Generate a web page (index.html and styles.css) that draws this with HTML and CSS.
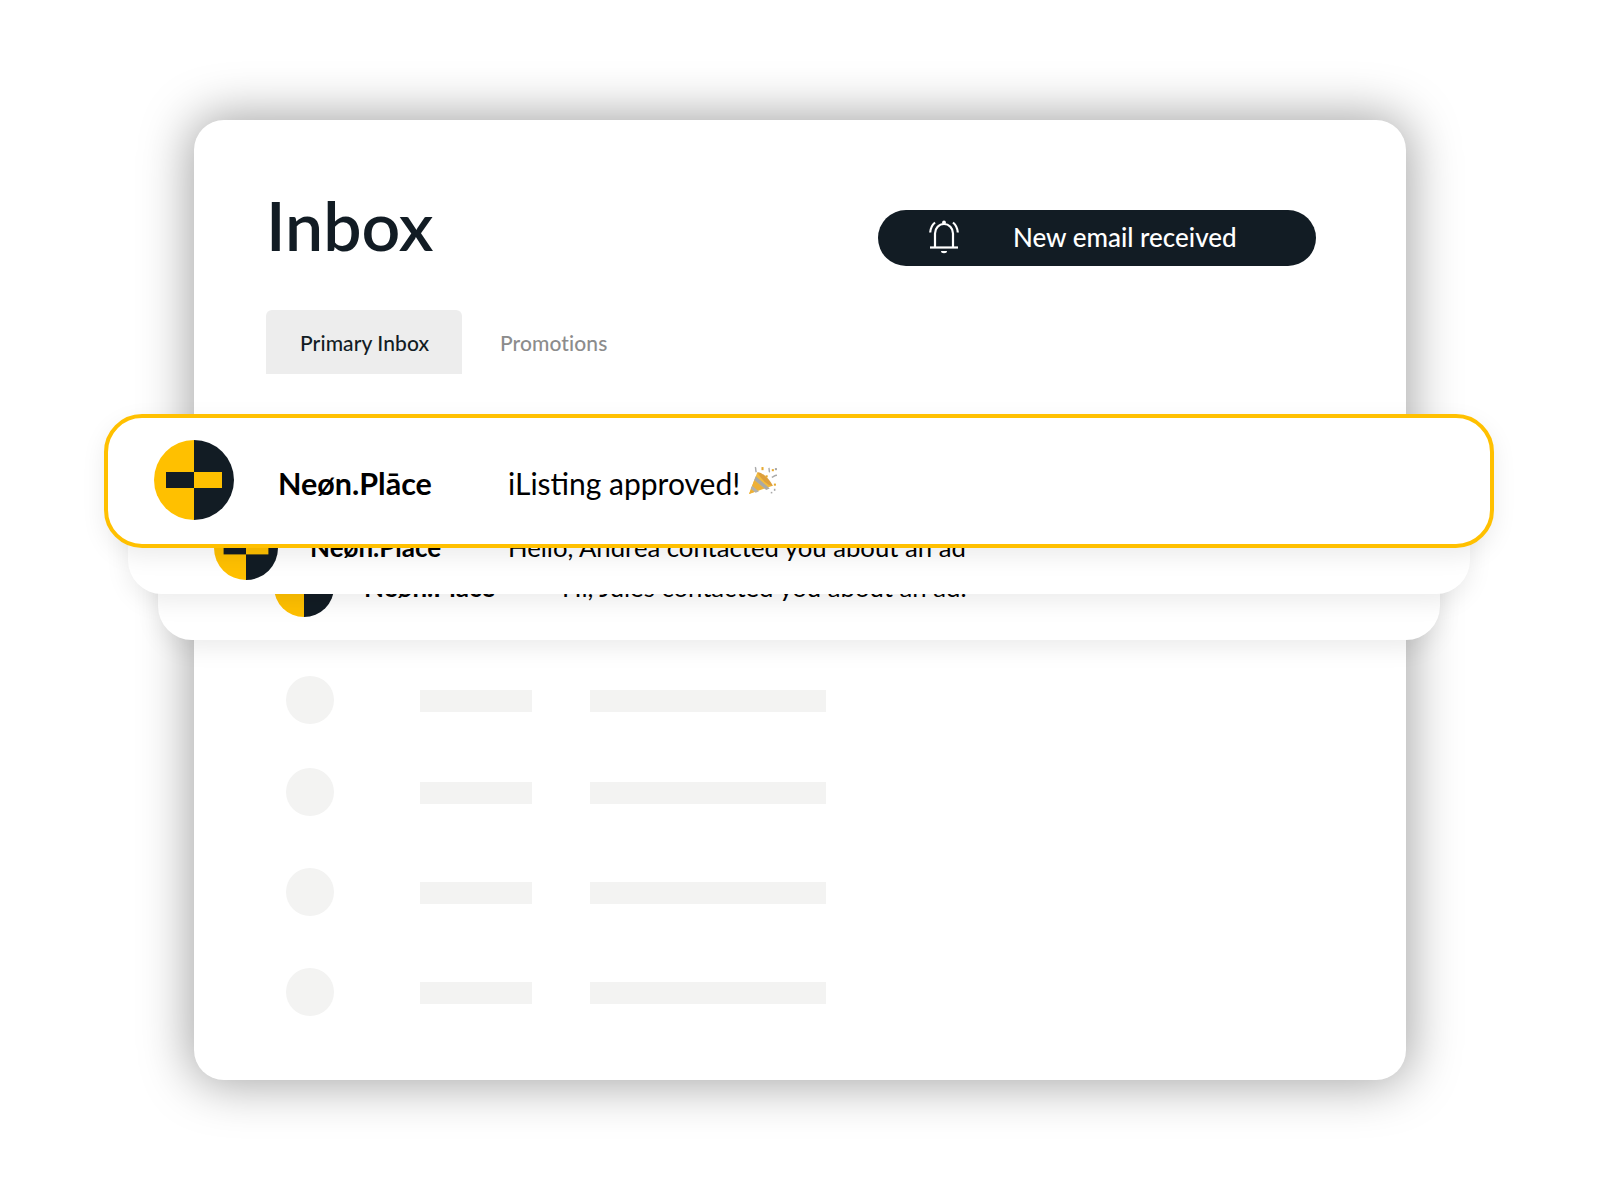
FILE: index.html
```html
<!DOCTYPE html>
<html lang="en">
<head>
    <meta charset="UTF-8">
    <title>Inbox</title>
    <link rel="stylesheet" href="styles.css">
</head>
<body>
    <svg class="defs" width="0" height="0">
        <symbol id="logo" viewBox="0 0 80 80">
            <path d="M40 0a40 40 0 0 0 0 80z" fill="#ffc000"/>
            <path d="M40 0a40 40 0 0 1 0 80z" fill="#121c24"/>
            <rect x="12" y="32" width="28" height="16" fill="#121c24"/>
            <rect x="40" y="32" width="28" height="16" fill="#ffc000"/>
        </symbol>
    </svg>

    <main class="inbox">
        <div class="inbox-top">
            <header class="inbox-header">
                <h1 class="inbox-title">Inbox</h1>
                <div class="notice">
                    <svg class="notice-bell" viewBox="0 0 30 36" width="30" height="36" fill="none" stroke="#fff" stroke-width="2.2">
                        <path d="M6 28V14.500a9 9.500 0 0 1 18 0V28"/>
                        <path d="M1 28.500h28"/>
                        <path d="M6 3.500C3 6 1.500 9.500 1.200 13.500"/>
                        <path d="M24 3.500c3 2.500 4.500 6 4.800 10"/>
                        <circle cx="15" cy="3.500" r="1.900" fill="#fff" stroke="none"/>
                        <path d="M12 32h6a3 2.200 0 0 1-6 0z" fill="#fff" stroke="none"/>
                    </svg>
                    <span class="notice-text">New email received</span>
                </div>
            </header>
            <nav class="tabs">
                <div class="tab tab-active">Primary Inbox</div>
                <div class="tab">Promotions</div>
            </nav>
        </div>

        <section class="stack">
            <div class="mail mail-first">
                <svg class="mail-logo"><use href="#logo"/></svg>
                <span class="mail-name">Neøn.Plāce</span>
                <span class="mail-text">iListing approved!
                    <svg class="popper" viewBox="0 0 30 28" width="31" height="29">
                        <path d="M2 27L10 6l15 13z" fill="#f2bb3d"/>
                        <path d="M2 27L7 13.500l9 8z" fill="#eeb036"/>
                        <path d="M8.500 10l13.500 11.800-3.400 1.300L7 13.500z" fill="#a9a9a5"/>
                        <path d="M5 19l6.500 5.700-3.200 1.200-4.700-4z" fill="#b3b1aa"/>
                        <path d="M10 6c4-1 12 7 15 13-4 1-12-7-15-13z" fill="#dd9f3c"/>
                        <g fill="none" stroke="#a8a8a8" stroke-width="1.400">
                            <path d="M8 1c1 2 0 3 1 5"/>
                            <path d="M24 11c2-1 3-2 5-2"/>
                            <path d="M21 2c1 1 0 3 1 4"/>
                        </g>
                        <g fill="#e6a92f">
                            <rect x="14" y="1" width="2" height="3"/>
                            <rect x="24" y="3" width="2" height="2"/>
                            <rect x="18" y="9" width="2" height="2"/>
                            <rect x="26" y="17" width="2" height="2"/>
                        </g>
                        <g fill="#a8a8a8">
                            <rect x="27" y="2" width="2" height="2"/>
                            <rect x="26" y="22" width="1.500" height="2"/>
                            <rect x="23" y="25" width="1.500" height="1.500"/>
                        </g>
                    </svg>
                </span>
            </div>
            <div class="mail mail-second">
                <svg class="mail-logo"><use href="#logo"/></svg>
                <span class="mail-name">Neøn.Plāce</span>
                <span class="mail-text">Hello, Andrea contacted you about an ad</span>
            </div>
            <div class="mail mail-third">
                <svg class="mail-logo"><use href="#logo"/></svg>
                <span class="mail-name">Neøn.Plāce</span>
                <span class="mail-text">Hi, Jules contacted you about an ad.</span>
            </div>
        </section>

        <section class="skeleton">
            <div class="skeleton-row">
                <div class="skeleton-dot"></div>
                <div class="skeleton-bar"></div>
                <div class="skeleton-bar skeleton-bar-long"></div>
            </div>
            <div class="skeleton-row">
                <div class="skeleton-dot"></div>
                <div class="skeleton-bar"></div>
                <div class="skeleton-bar skeleton-bar-long"></div>
            </div>
            <div class="skeleton-row">
                <div class="skeleton-dot"></div>
                <div class="skeleton-bar"></div>
                <div class="skeleton-bar skeleton-bar-long"></div>
            </div>
            <div class="skeleton-row">
                <div class="skeleton-dot"></div>
                <div class="skeleton-bar"></div>
                <div class="skeleton-bar skeleton-bar-long"></div>
            </div>
        </section>
    </main>
</body>
</html>
```

FILE: styles.css
```css
body {
    margin: 0;
    padding: 120px 194px;
    background: #fff;
    color: #121c24;
    font-family: "Lato", "Noto Sans", sans-serif;
}

.defs {
    display: block;
    height: 0;
}

.inbox {
    height: 960px;
    background: #fff;
    border-radius: 30px;
    box-shadow: 0 0 50px 4px rgba(0, 0, 0, 0.36);
}

.inbox-top {
    padding: 70px 90px 0 72px;
}

.inbox-header {
    display: flex;
    justify-content: space-between;
    align-items: flex-start;
    height: 76px;
}

.inbox-title {
    margin: -3px 0 0;
    font-size: 68px;
    line-height: 76px;
    font-weight: 600;
}

.notice {
    display: flex;
    align-items: center;
    width: 438px;
    height: 56px;
    margin-top: 20px;
    box-sizing: border-box;
    padding-left: 51px;
    background: #121c24;
    border-radius: 28px;
    color: #fff;
}

.notice-bell {
    margin-top: -2px;
}

.notice-text {
    margin: -2px 0 0 54px;
    font-size: 26px;
    font-weight: 500;
}

.tabs {
    display: flex;
    margin-top: 44px;
}

.tab {
    display: flex;
    align-items: center;
    height: 64px;
    padding: 0 34px;
    font-size: 21px;
    letter-spacing: 0.1px;
    white-space: nowrap;
    font-weight: 500;
    color: #8c8c8c;
    border-radius: 6px 6px 0 0;
}

.tab-active {
    width: 196px;
    box-sizing: border-box;
    background: #ededed;
    color: #121c24;
    margin-right: 4px;
}

.stack {
    margin: 40px -88px 0 -90px;
}

/* cards sit on top of each other, first one highest */
.mail {
    position: relative;
    display: flex;
    align-items: center;
    background: #fff;
    color: #000;
    box-sizing: border-box;
    box-shadow: 0 8px 24px rgba(0, 0, 0, 0.08);
}

.mail-logo {
    flex: none;
}

.mail-name {
    flex: none;
    font-weight: 700;
}

.mail-first {
    z-index: 3;
    height: 134px;
    padding-left: 46px;
    border: 4px solid #ffc000;
    border-radius: 38px;
}

.mail-first .mail-logo {
    width: 80px;
    height: 80px;
    margin-top: -2px;
}

.mail-first .mail-name {
    width: 230px;
    margin-left: 44px;
    padding-top: 4px;
    font-size: 30.500px;
}

.mail-first .mail-text {
    display: flex;
    align-items: center;
    gap: 7px;
    padding-top: 4px;
    font-size: 30px;
}

.popper {
    margin-top: -6px;
}

.mail-second {
    z-index: 2;
    height: 92px;
    margin: -46px 24px 0;
    padding-left: 86px;
    border-radius: 0 0 34px 34px;
}

.mail-second .mail-logo,
.mail-third .mail-logo {
    width: 64px;
    height: 64px;
}

.mail-second .mail-name {
    width: 198px;
    margin-left: 32px;
    padding-bottom: 2px;
    font-size: 26px;
}

.mail-second .mail-text {
    padding-bottom: 2px;
    font-size: 25.700px;
}

.mail-third {
    z-index: 1;
    height: 106px;
    margin: -60px 54px 0;
    padding-left: 116px;
    border-radius: 0 0 34px 34px;
}

.mail-third .mail-logo {
    width: 60px;
    height: 60px;
}

.mail-third .mail-name {
    width: 198px;
    margin-left: 30px;
    padding-bottom: 1px;
    font-size: 26px;
}

.mail-third .mail-text {
    padding-bottom: 1px;
    font-size: 25.700px;
}

.skeleton {
    padding: 36px 0 0 92px;
}

.skeleton-row {
    display: flex;
    align-items: center;
    margin-bottom: 52px;
}

.skeleton-row:first-child {
    margin-bottom: 44px;
}

.skeleton-dot {
    width: 48px;
    height: 48px;
    border-radius: 50%;
    background: #f3f3f2;
}

.skeleton-bar {
    width: 112px;
    height: 22px;
    margin: 2px 0 0 86px;
    background: #f3f3f2;
}

.skeleton-bar-long {
    width: 236px;
    margin-left: 58px;
}
```
